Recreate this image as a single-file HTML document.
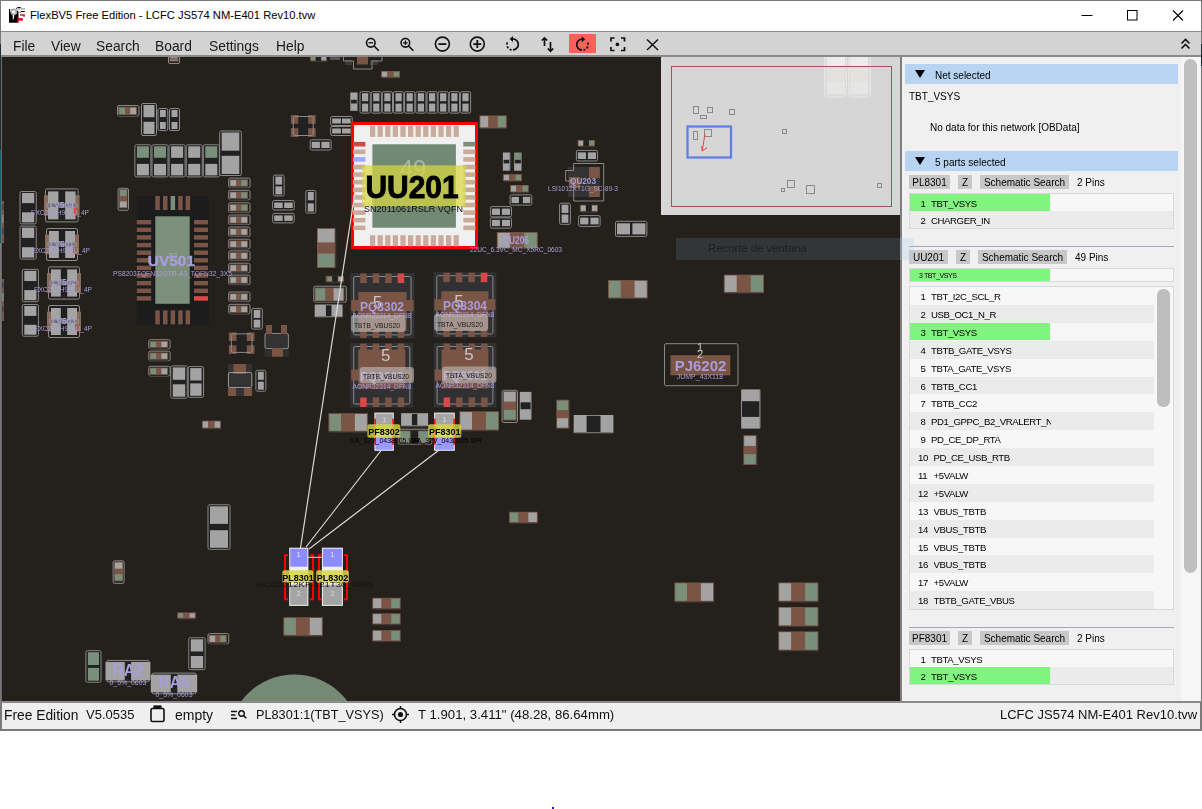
<!DOCTYPE html>
<html><head><meta charset="utf-8">
<style>
*{box-sizing:border-box;margin:0;padding:0}
html,body{width:1202px;height:809px;overflow:hidden;background:#fff;font-family:"Liberation Sans",sans-serif;color:#111}
.abs{position:absolute}
.mi,.st,.p,.btn,.tbl,svg,.gs{will-change:transform}
#win{position:absolute;left:0;top:0;width:1202px;height:731px;border:1px solid #7a7a7a;border-bottom:none;background:#fff}
#title{position:absolute;left:1px;top:1px;width:1200px;height:30px;background:#fff}
#title .t{position:absolute;left:29px;top:7.5px;font-size:11.2px;color:#000;white-space:pre}
#menubar{position:absolute;left:1px;top:31px;width:1200px;height:26px;background:#d3d3d3;border-top:1px solid #8c8c8c;border-bottom:2px solid #8a8a8a}
.mi{position:absolute;top:38.5px;font-size:13.8px;color:#1a1a1a;white-space:pre}
#canvas{position:absolute;left:2px;top:57px;width:898px;height:644px;background:#24211c;overflow:hidden}
#panel{position:absolute;left:900px;top:57px;width:301px;height:645px;background:#f0f0f0;border-left:2px solid #7d7d7d;overflow:hidden}
#status{position:absolute;left:0;top:701px;width:1202px;height:30px;background:#efefef;border-top:2px solid #8a8a8a;border-bottom:2px solid #7a7a7a;border-left:2px solid #7a7a7a;border-right:2px solid #7a7a7a}
.st{position:absolute;top:707px;font-size:13px;color:#111;white-space:pre}
.hdr{position:absolute;left:905px;width:273px;background:#b8d4f2}
.tri{position:absolute;width:0;height:0;border-left:5px solid transparent;border-right:5px solid transparent;border-top:8px solid #000}
.btn{position:absolute;height:14px;background:#c8c8c8;font-size:10px;color:#000;white-space:pre;line-height:15px;text-align:center}
.p{position:absolute;font-size:10px;color:#000;white-space:pre}
.tbl{position:absolute;left:909px;width:265px;border:1px solid #d8d8d8;background:#f7f7f7}
.row{position:absolute;left:0;width:263px;height:18px}
.g{position:absolute;left:0;top:0;width:140px;height:17px;background:#80f47e}
.row .nm{width:120px;overflow:hidden}
.row span{position:absolute;top:3.5px;font-size:9.6px;color:#000;white-space:pre;letter-spacing:-0.4px}
</style></head><body>
<div id="win"></div>
<div id="title">
  <svg class="abs" style="left:4px;top:3px" width="24" height="24" viewBox="5 4 24 24">
    <path d="M9 9h1.2v3.5l1.5-1.5h2.5l2.5-1 1.8 1.5V22.8H9z" fill="#000"/>
    <path d="M11.2 12.5c0.8 1 1.3 2.5 1.6 3.5 0.1 1.5-0.3 2.5 0.2 4.5 0.5-1.5 1-3 1.3-4.5l-0.5-3z" fill="#fff"/>
    <circle cx="13.8" cy="11.9" r="2.5" fill="#fff" stroke="#a8a8a8" stroke-width="1.6"/>
    <path d="M16.8 8.9h8.2" stroke="#b8b8b8" stroke-width="1.7"/>
    <path d="M16.3 8.6l1.2-1.1h3.3" stroke="#000" stroke-width="1" fill="none"/>
    <path d="M20 12.8l1-1.3h3.8" stroke="#000" stroke-width="1" fill="none"/>
    <path d="M20.1 14.2h4.8v2.6h-1.6v-1h-3.2z" fill="#d81818"/>
    <path d="M17.4 18.1h5.4v2.6h-4.6v2h-0.8z" fill="#d81818"/>
  </svg>
  <div class="t">FlexBV5 Free Edition - LCFC JS574 NM-E401 Rev10.tvw</div>
  <svg class="abs" style="left:1069px;top:-1px" width="130" height="30">
    <path d="M11.5 15.5h11" stroke="#000" stroke-width="1"/>
    <rect x="57.5" y="10.5" width="9.5" height="9.5" fill="none" stroke="#000" stroke-width="1"/>
    <path d="M103 10.5l10 10M113 10.5l-10 10" stroke="#000" stroke-width="1.1"/>
  </svg>
</div>
<div id="menubar"></div>
<div class="mi" style="left:13px">File</div>
<div class="mi" style="left:51px">View</div>
<div class="mi" style="left:96px">Search</div>
<div class="mi" style="left:155px">Board</div>
<div class="mi" style="left:209px">Settings</div>
<div class="mi" style="left:276px">Help</div>
<svg class="abs" style="left:0;top:32px" width="1202" height="23">
  <g fill="none" stroke="#111" stroke-width="1.6">
    <circle cx="370.8" cy="10.8" r="4.3"/><path d="M373.8 13.8l5 5"/><path d="M368.5 10.8h4.6" stroke-width="1.3"/>
    <circle cx="405.4" cy="10.8" r="4.3"/><path d="M408.4 13.8l5 5"/><path d="M403.1 10.8h4.6M405.4 8.5v4.6" stroke-width="1.3"/>
    <circle cx="442.4" cy="12.1" r="7"/><path d="M438.4 12.1h8" stroke-width="1.8"/>
    <circle cx="477.3" cy="12.1" r="7"/><path d="M473.3 12.1h8M477.3 8.1v8" stroke-width="1.8"/>
  </g>
  <rect x="569" y="2" width="27" height="19" fill="#f8625a"/>
  <g fill="none" stroke="#111" stroke-width="1.7">
    <path d="M512.6 6.9 A5.5 5.5 0 0 1 513 17.9" />
    <path d="M511.6 17.9 A5.5 5.5 0 0 1 507.4 10.2" stroke-dasharray="2.2 1.6"/>
    <path d="M544.5 6v8M541.8 8.5l2.7-2.6 2.7 2.6M550.5 10v9M547.8 16.5l2.7 2.7 2.7-2.7"/>
    <path d="M582.4 7.1 A5.5 5.5 0 0 0 582 18.1" />
    <path d="M583.4 18.1 A5.5 5.5 0 0 0 587.6 10.4" stroke-dasharray="2.2 1.6"/>
    <path d="M611 9.5v-3.5h3.5M621 6h3.5v3.5M624.5 15v3.5H621M614.5 18.5H611V15"/>
    <path d="M647 7.5l11 10.5M658 7.5l-11 10.5" stroke-width="1.5"/>
  </g>
  <circle cx="617.4" cy="12.4" r="1.8" fill="#111"/>
  <path d="M509.6 7l3.4-3v6z M585.2 7.2l-3.4-3v6z" fill="#111"/>
  <path d="M1181.5 11.5l4-4 4 4M1181.5 16.5l4-4 4 4" fill="none" stroke="#111" stroke-width="1.6"/>
</svg>

<div id="canvas"></div>
<div class="abs" style="left:1px;top:57px;width:1px;height:645px;background:#6a6a6a"></div>
<div class="abs" style="left:552px;top:807px;width:2px;height:2px;background:#1a1aff"></div>
<div class="abs" style="left:0;top:44px;width:1px;height:106px;background:#222c33"></div>
<div class="abs" style="left:0;top:150px;width:1px;height:93px;background:#17606f"></div>
<div class="abs" style="left:1201px;top:44px;width:1px;height:22px;background:#1d262c"></div>
<!--CANVAS--><svg class="abs" style="left:2px;top:57px" width="898" height="644" viewBox="2 57 898 644" font-family="Liberation Sans, sans-serif"><rect x="311.0" y="61.0" width="16.0" height="1.0" fill="#3a3a3a" />
<rect x="310.0" y="55.0" width="17.0" height="6.0" fill="#7a5546" />
<rect x="311.0" y="55.8" width="4.4" height="4.4" fill="#7a8f7a" />
<rect x="315.8" y="55.0" width="5.3" height="6.0" fill="#212121" />
<rect x="321.4" y="55.8" width="4.6" height="4.4" fill="#a3a3a3" />
<rect x="330.0" y="55.0" width="10.0" height="5.0" fill="#555" />
<rect x="345.0" y="60.0" width="7.0" height="5.0" fill="#3a3a3a" />
<rect x="370.0" y="60.0" width="8.0" height="5.0" fill="#3a3a3a" />
<rect x="357.0" y="57.0" width="11.0" height="7.5" fill="#7a5546" />
<path d="M343.5 55v6h10v8h18.5v-8h10v-6" fill="none" stroke="#888" stroke-width="1"/>
<rect x="168.5" y="55.5" width="11.0" height="8.0" rx="1.5" fill="none" stroke="#8a8a8a" stroke-width="1"/>
<rect x="169.5" y="56.2" width="9.0" height="5.3" fill="#7a5546" />
<rect x="170.3" y="57.2" width="7.4" height="0.9" fill="#a3a3a3" />
<rect x="170.3" y="59.6" width="7.4" height="0.9" fill="#a3a3a3" />
<rect x="382.0" y="77.5" width="18.0" height="1.0" fill="#3a3a3a" />
<rect x="381.0" y="71.0" width="19.0" height="6.5" fill="#7a5546" />
<rect x="382.0" y="71.8" width="5.1" height="4.9" fill="#a3a3a3" />
<rect x="393.7" y="71.8" width="5.3" height="4.9" fill="#7a8f7a" />
<rect x="117.5" y="105.5" width="21.5" height="10.5" rx="1.5" fill="none" stroke="#8a8a8a" stroke-width="1"/>
<rect x="118.2" y="115.0" width="18.8" height="1.0" fill="#212121" />
<rect x="118.2" y="106.8" width="18.8" height="8.2" fill="#7a5546" />
<rect x="119.2" y="107.6" width="5.8" height="6.6" fill="#7a8f7a" />
<rect x="130.2" y="107.6" width="5.8" height="6.6" fill="#a3a3a3" />
<rect x="141.5" y="103.5" width="15.0" height="32.0" rx="1.5" fill="none" stroke="#8a8a8a" stroke-width="1"/>
<rect x="142.5" y="104.5" width="13.0" height="30.0" fill="#212121" />
<rect x="143.5" y="105.0" width="11.0" height="12.2" fill="#a3a3a3" />
<rect x="143.5" y="121.8" width="11.0" height="12.2" fill="#a3a3a3" />
<rect x="158.0" y="108.5" width="9.8" height="22.0" rx="1.5" fill="none" stroke="#8a8a8a" stroke-width="1"/>
<rect x="159.0" y="109.5" width="7.8" height="20.0" fill="#212121" />
<rect x="160.0" y="110.0" width="5.8" height="7.0" fill="#a3a3a3" />
<rect x="160.0" y="122.0" width="5.8" height="7.0" fill="#a3a3a3" />
<rect x="169.5" y="108.5" width="10.0" height="22.0" rx="1.5" fill="none" stroke="#8a8a8a" stroke-width="1"/>
<rect x="170.5" y="109.5" width="8.0" height="20.0" fill="#212121" />
<rect x="171.5" y="110.0" width="6.0" height="7.0" fill="#a3a3a3" />
<rect x="171.5" y="122.0" width="6.0" height="7.0" fill="#a3a3a3" />
<rect x="134.9" y="144.8" width="16.0" height="32.1" rx="1.5" fill="none" stroke="#8a8a8a" stroke-width="1"/>
<rect x="135.9" y="145.8" width="14.0" height="30.1" fill="#212121" />
<rect x="136.9" y="146.3" width="12.0" height="11.5" fill="#7a8f7a" />
<rect x="136.9" y="163.9" width="12.0" height="11.5" fill="#a3a3a3" />
<rect x="152.0" y="144.8" width="16.0" height="32.1" rx="1.5" fill="none" stroke="#8a8a8a" stroke-width="1"/>
<rect x="153.0" y="145.8" width="14.0" height="30.1" fill="#212121" />
<rect x="154.0" y="146.3" width="12.0" height="11.5" fill="#7a8f7a" />
<rect x="154.0" y="163.9" width="12.0" height="11.5" fill="#a3a3a3" />
<rect x="169.1" y="144.8" width="16.0" height="32.1" rx="1.5" fill="none" stroke="#8a8a8a" stroke-width="1"/>
<rect x="170.1" y="145.8" width="14.0" height="30.1" fill="#212121" />
<rect x="171.1" y="146.3" width="12.0" height="11.5" fill="#a3a3a3" />
<rect x="171.1" y="163.9" width="12.0" height="11.5" fill="#a3a3a3" />
<rect x="186.2" y="144.8" width="16.0" height="32.1" rx="1.5" fill="none" stroke="#8a8a8a" stroke-width="1"/>
<rect x="187.2" y="145.8" width="14.0" height="30.1" fill="#212121" />
<rect x="188.2" y="146.3" width="12.0" height="11.5" fill="#a3a3a3" />
<rect x="188.2" y="163.9" width="12.0" height="11.5" fill="#a3a3a3" />
<rect x="203.3" y="144.8" width="16.0" height="32.1" rx="1.5" fill="none" stroke="#8a8a8a" stroke-width="1"/>
<rect x="204.3" y="145.8" width="14.0" height="30.1" fill="#212121" />
<rect x="205.3" y="146.3" width="12.0" height="11.5" fill="#7a8f7a" />
<rect x="205.3" y="163.9" width="12.0" height="11.5" fill="#a3a3a3" />
<rect x="219.7" y="131.0" width="21.6" height="44.5" rx="1.5" fill="none" stroke="#8a8a8a" stroke-width="1"/>
<rect x="220.7" y="132.0" width="19.6" height="42.5" fill="#212121" />
<rect x="221.7" y="132.5" width="17.6" height="18.2" fill="#a3a3a3" />
<rect x="221.7" y="155.8" width="17.6" height="18.2" fill="#a3a3a3" />
<rect x="290.8" y="115.0" width="24.9" height="22.0" fill="#212121" />
<rect x="290.8" y="115.0" width="7.5" height="8.8" fill="#7a5546" />
<rect x="308.2" y="115.0" width="7.5" height="8.8" fill="#7a5546" />
<rect x="290.8" y="128.2" width="7.5" height="8.8" fill="#7a5546" />
<rect x="308.2" y="128.2" width="7.5" height="8.8" fill="#7a5546" />
<rect x="293.3" y="116.5" width="19.9" height="19.0" rx="1.5" fill="none" stroke="#8a8a8a" stroke-width="1"/>
<rect x="310.2" y="139.8" width="20.9" height="10.2" rx="1.5" fill="none" stroke="#8a8a8a" stroke-width="1"/>
<rect x="311.2" y="140.8" width="18.9" height="8.2" fill="#212121" />
<rect x="311.7" y="141.8" width="8.2" height="6.2" fill="#a3a3a3" />
<rect x="321.4" y="141.8" width="8.2" height="6.2" fill="#a3a3a3" />
<rect x="330.7" y="116.5" width="21.5" height="9.0" rx="1.5" fill="none" stroke="#8a8a8a" stroke-width="1"/>
<rect x="331.7" y="117.5" width="19.5" height="7.0" fill="#212121" />
<rect x="332.2" y="118.5" width="8.7" height="5.0" fill="#a3a3a3" />
<rect x="342.0" y="118.5" width="8.7" height="5.0" fill="#a3a3a3" />
<rect x="330.7" y="126.5" width="21.5" height="9.0" rx="1.5" fill="none" stroke="#8a8a8a" stroke-width="1"/>
<rect x="331.7" y="127.5" width="19.5" height="7.0" fill="#212121" />
<rect x="332.2" y="128.5" width="8.7" height="5.0" fill="#a3a3a3" />
<rect x="342.0" y="128.5" width="8.7" height="5.0" fill="#a3a3a3" />
<rect x="350.3" y="92.5" width="7.3" height="9.2" fill="#a3a3a3" />
<rect x="350.3" y="101.7" width="7.3" height="9.1" fill="#a3a3a3" />
<rect x="351.1" y="99.8" width="5.7" height="3.7" fill="#212121" />
<rect x="357.0" y="93.5" width="1.0" height="16.3" fill="#666" />
<rect x="360.0" y="91.7" width="10.2" height="21.4" rx="1.5" fill="none" stroke="#8a8a8a" stroke-width="1"/>
<rect x="361.0" y="92.7" width="8.2" height="19.4" fill="#212121" />
<rect x="362.0" y="93.2" width="6.2" height="8.0" fill="#a3a3a3" />
<rect x="362.0" y="103.6" width="6.2" height="8.0" fill="#a3a3a3" />
<rect x="371.2" y="91.7" width="10.2" height="21.4" rx="1.5" fill="none" stroke="#8a8a8a" stroke-width="1"/>
<rect x="372.2" y="92.7" width="8.2" height="19.4" fill="#212121" />
<rect x="373.2" y="93.2" width="6.2" height="8.0" fill="#a3a3a3" />
<rect x="373.2" y="103.6" width="6.2" height="8.0" fill="#a3a3a3" />
<rect x="382.3" y="91.7" width="10.2" height="21.4" rx="1.5" fill="none" stroke="#8a8a8a" stroke-width="1"/>
<rect x="383.3" y="92.7" width="8.2" height="19.4" fill="#212121" />
<rect x="384.3" y="93.2" width="6.2" height="8.0" fill="#a3a3a3" />
<rect x="384.3" y="103.6" width="6.2" height="8.0" fill="#a3a3a3" />
<rect x="393.5" y="91.7" width="10.2" height="21.4" rx="1.5" fill="none" stroke="#8a8a8a" stroke-width="1"/>
<rect x="394.5" y="92.7" width="8.2" height="19.4" fill="#212121" />
<rect x="395.5" y="93.2" width="6.2" height="8.0" fill="#a3a3a3" />
<rect x="395.5" y="103.6" width="6.2" height="8.0" fill="#a3a3a3" />
<rect x="404.6" y="91.7" width="10.2" height="21.4" rx="1.5" fill="none" stroke="#8a8a8a" stroke-width="1"/>
<rect x="405.6" y="92.7" width="8.2" height="19.4" fill="#212121" />
<rect x="406.6" y="93.2" width="6.2" height="8.0" fill="#a3a3a3" />
<rect x="406.6" y="103.6" width="6.2" height="8.0" fill="#a3a3a3" />
<rect x="415.8" y="91.7" width="10.2" height="21.4" rx="1.5" fill="none" stroke="#8a8a8a" stroke-width="1"/>
<rect x="416.8" y="92.7" width="8.2" height="19.4" fill="#212121" />
<rect x="417.8" y="93.2" width="6.2" height="8.0" fill="#a3a3a3" />
<rect x="417.8" y="103.6" width="6.2" height="8.0" fill="#a3a3a3" />
<rect x="427.0" y="91.7" width="10.2" height="21.4" rx="1.5" fill="none" stroke="#8a8a8a" stroke-width="1"/>
<rect x="428.0" y="92.7" width="8.2" height="19.4" fill="#212121" />
<rect x="429.0" y="93.2" width="6.2" height="8.0" fill="#a3a3a3" />
<rect x="429.0" y="103.6" width="6.2" height="8.0" fill="#a3a3a3" />
<rect x="438.1" y="91.7" width="10.2" height="21.4" rx="1.5" fill="none" stroke="#8a8a8a" stroke-width="1"/>
<rect x="439.1" y="92.7" width="8.2" height="19.4" fill="#212121" />
<rect x="440.1" y="93.2" width="6.2" height="8.0" fill="#a3a3a3" />
<rect x="440.1" y="103.6" width="6.2" height="8.0" fill="#a3a3a3" />
<rect x="449.3" y="91.7" width="10.2" height="21.4" rx="1.5" fill="none" stroke="#8a8a8a" stroke-width="1"/>
<rect x="450.3" y="92.7" width="8.2" height="19.4" fill="#212121" />
<rect x="451.3" y="93.2" width="6.2" height="8.0" fill="#a3a3a3" />
<rect x="451.3" y="103.6" width="6.2" height="8.0" fill="#a3a3a3" />
<rect x="460.4" y="91.7" width="10.2" height="21.4" rx="1.5" fill="none" stroke="#8a8a8a" stroke-width="1"/>
<rect x="461.4" y="92.7" width="8.2" height="19.4" fill="#212121" />
<rect x="462.4" y="93.2" width="6.2" height="8.0" fill="#a3a3a3" />
<rect x="462.4" y="103.6" width="6.2" height="8.0" fill="#a3a3a3" />
<rect x="480.4" y="128.0" width="26.4" height="1.0" fill="#3a3a3a" />
<rect x="479.4" y="115.4" width="27.4" height="12.6" fill="#7a5546" />
<rect x="480.4" y="116.2" width="7.8" height="11.0" fill="#a3a3a3" />
<rect x="497.8" y="116.2" width="8.0" height="11.0" fill="#7a8f7a" />
<rect x="228.7" y="178.1" width="21.3" height="9.5" rx="1.5" fill="none" stroke="#8a8a8a" stroke-width="1"/>
<rect x="229.4" y="186.6" width="18.6" height="1.0" fill="#212121" />
<rect x="229.4" y="179.4" width="18.6" height="7.2" fill="#7a5546" />
<rect x="230.4" y="180.2" width="5.7" height="5.6" fill="#a3a3a3" />
<rect x="241.3" y="180.2" width="5.7" height="5.6" fill="#7a8f7a" />
<rect x="228.7" y="190.3" width="21.3" height="9.5" rx="1.5" fill="none" stroke="#8a8a8a" stroke-width="1"/>
<rect x="229.4" y="198.8" width="18.6" height="1.0" fill="#212121" />
<rect x="229.4" y="191.6" width="18.6" height="7.2" fill="#7a5546" />
<rect x="230.4" y="192.4" width="5.7" height="5.6" fill="#a3a3a3" />
<rect x="241.3" y="192.4" width="5.7" height="5.6" fill="#7a8f7a" />
<rect x="228.7" y="202.8" width="21.3" height="9.5" rx="1.5" fill="none" stroke="#8a8a8a" stroke-width="1"/>
<rect x="229.4" y="211.3" width="18.6" height="1.0" fill="#212121" />
<rect x="229.4" y="204.1" width="18.6" height="7.2" fill="#7a5546" />
<rect x="230.4" y="204.9" width="5.7" height="5.6" fill="#a3a3a3" />
<rect x="241.3" y="204.9" width="5.7" height="5.6" fill="#7a8f7a" />
<rect x="228.7" y="215.0" width="21.3" height="9.5" rx="1.5" fill="none" stroke="#8a8a8a" stroke-width="1"/>
<rect x="229.4" y="223.5" width="18.6" height="1.0" fill="#212121" />
<rect x="229.4" y="216.3" width="18.6" height="7.2" fill="#7a5546" />
<rect x="230.4" y="217.1" width="5.7" height="5.6" fill="#a3a3a3" />
<rect x="241.3" y="217.1" width="5.7" height="5.6" fill="#a3a3a3" />
<rect x="228.7" y="227.0" width="21.3" height="9.5" rx="1.5" fill="none" stroke="#8a8a8a" stroke-width="1"/>
<rect x="229.4" y="235.5" width="18.6" height="1.0" fill="#212121" />
<rect x="229.4" y="228.3" width="18.6" height="7.2" fill="#7a5546" />
<rect x="230.4" y="229.1" width="5.7" height="5.6" fill="#a3a3a3" />
<rect x="241.3" y="229.1" width="5.7" height="5.6" fill="#a3a3a3" />
<rect x="228.7" y="239.2" width="21.3" height="9.5" rx="1.5" fill="none" stroke="#8a8a8a" stroke-width="1"/>
<rect x="229.4" y="247.7" width="18.6" height="1.0" fill="#212121" />
<rect x="229.4" y="240.5" width="18.6" height="7.2" fill="#7a5546" />
<rect x="230.4" y="241.3" width="5.7" height="5.6" fill="#a3a3a3" />
<rect x="241.3" y="241.3" width="5.7" height="5.6" fill="#a3a3a3" />
<rect x="228.7" y="250.9" width="21.3" height="9.5" rx="1.5" fill="none" stroke="#8a8a8a" stroke-width="1"/>
<rect x="229.4" y="259.4" width="18.6" height="1.0" fill="#212121" />
<rect x="229.4" y="252.2" width="18.6" height="7.2" fill="#7a5546" />
<rect x="230.4" y="253.0" width="5.7" height="5.6" fill="#a3a3a3" />
<rect x="241.3" y="253.0" width="5.7" height="5.6" fill="#a3a3a3" />
<rect x="228.7" y="263.2" width="21.3" height="9.5" rx="1.5" fill="none" stroke="#8a8a8a" stroke-width="1"/>
<rect x="229.4" y="271.7" width="18.6" height="1.0" fill="#212121" />
<rect x="229.4" y="264.5" width="18.6" height="7.2" fill="#7a5546" />
<rect x="230.4" y="265.3" width="5.7" height="5.6" fill="#a3a3a3" />
<rect x="241.3" y="265.3" width="5.7" height="5.6" fill="#a3a3a3" />
<rect x="228.7" y="275.1" width="21.3" height="9.5" rx="1.5" fill="none" stroke="#8a8a8a" stroke-width="1"/>
<rect x="229.4" y="283.6" width="18.6" height="1.0" fill="#212121" />
<rect x="229.4" y="276.4" width="18.6" height="7.2" fill="#7a5546" />
<rect x="230.4" y="277.2" width="5.7" height="5.6" fill="#a3a3a3" />
<rect x="241.3" y="277.2" width="5.7" height="5.6" fill="#a3a3a3" />
<rect x="228.7" y="292.0" width="21.3" height="9.5" rx="1.5" fill="none" stroke="#8a8a8a" stroke-width="1"/>
<rect x="229.4" y="300.5" width="18.6" height="1.0" fill="#212121" />
<rect x="229.4" y="293.3" width="18.6" height="7.2" fill="#7a5546" />
<rect x="230.4" y="294.1" width="5.7" height="5.6" fill="#a3a3a3" />
<rect x="241.3" y="294.1" width="5.7" height="5.6" fill="#a3a3a3" />
<rect x="228.7" y="304.3" width="21.3" height="9.5" rx="1.5" fill="none" stroke="#8a8a8a" stroke-width="1"/>
<rect x="229.4" y="312.8" width="18.6" height="1.0" fill="#212121" />
<rect x="229.4" y="305.6" width="18.6" height="7.2" fill="#7a5546" />
<rect x="230.4" y="306.4" width="5.7" height="5.6" fill="#a3a3a3" />
<rect x="241.3" y="306.4" width="5.7" height="5.6" fill="#a3a3a3" />
<rect x="251.7" y="308.5" width="10.6" height="20.6" rx="1.5" fill="none" stroke="#8a8a8a" stroke-width="1"/>
<rect x="252.7" y="309.5" width="8.6" height="18.6" fill="#212121" />
<rect x="253.7" y="310.0" width="6.6" height="7.9" fill="#a3a3a3" />
<rect x="253.7" y="319.7" width="6.6" height="7.9" fill="#a3a3a3" />
<rect x="273.4" y="175.1" width="10.7" height="20.8" rx="1.5" fill="none" stroke="#8a8a8a" stroke-width="1"/>
<rect x="274.4" y="176.1" width="8.7" height="18.8" fill="#212121" />
<rect x="275.4" y="176.6" width="6.7" height="8.0" fill="#a3a3a3" />
<rect x="275.4" y="186.4" width="6.7" height="8.0" fill="#a3a3a3" />
<rect x="272.7" y="200.5" width="21.5" height="9.5" rx="1.5" fill="none" stroke="#8a8a8a" stroke-width="1"/>
<rect x="273.7" y="201.5" width="19.5" height="7.5" fill="#212121" />
<rect x="274.2" y="202.5" width="8.5" height="5.5" fill="#a3a3a3" />
<rect x="284.2" y="202.5" width="8.5" height="5.5" fill="#a3a3a3" />
<rect x="272.7" y="213.4" width="21.5" height="9.5" rx="1.5" fill="none" stroke="#8a8a8a" stroke-width="1"/>
<rect x="273.7" y="214.4" width="19.5" height="7.5" fill="#212121" />
<rect x="274.2" y="215.4" width="8.5" height="5.5" fill="#a3a3a3" />
<rect x="284.2" y="215.4" width="8.5" height="5.5" fill="#a3a3a3" />
<rect x="305.8" y="190.5" width="10.0" height="22.6" rx="1.5" fill="none" stroke="#8a8a8a" stroke-width="1"/>
<rect x="306.8" y="191.5" width="8.0" height="20.6" fill="#212121" />
<rect x="307.8" y="192.0" width="6.0" height="8.3" fill="#a3a3a3" />
<rect x="307.8" y="203.3" width="6.0" height="8.3" fill="#a3a3a3" />
<rect x="335.3" y="229.0" width="1.0" height="39.0" fill="#3a3a3a" />
<rect x="317.0" y="228.0" width="18.3" height="40.0" fill="#7a5546" />
<rect x="317.8" y="229.0" width="16.7" height="13.4" fill="#a3a3a3" />
<rect x="317.8" y="253.6" width="16.7" height="13.4" fill="#7a8f7a" />
<rect x="326.7" y="281.6" width="17.3" height="1.0" fill="#3a3a3a" />
<rect x="325.7" y="275.8" width="18.3" height="5.8" fill="#7a5546" />
<rect x="326.7" y="276.6" width="4.9" height="4.2" fill="#7a8f7a" />
<rect x="331.9" y="275.8" width="5.7" height="5.8" fill="#212121" />
<rect x="338.0" y="276.6" width="5.0" height="4.2" fill="#a3a3a3" />
<rect x="313.8" y="286.2" width="32.5" height="16.1" rx="1.5" fill="none" stroke="#8a8a8a" stroke-width="1"/>
<rect x="314.5" y="301.3" width="29.8" height="1.0" fill="#212121" />
<rect x="314.5" y="287.5" width="29.8" height="13.8" fill="#7a5546" />
<rect x="315.5" y="288.3" width="9.7" height="12.2" fill="#7a8f7a" />
<rect x="333.6" y="288.3" width="9.7" height="12.2" fill="#a3a3a3" />
<rect x="314.7" y="304.5" width="13.9" height="12.5" fill="#a3a3a3" />
<rect x="328.6" y="304.5" width="14.0" height="12.5" fill="#a3a3a3" />
<rect x="325.9" y="305.3" width="5.6" height="10.9" fill="#212121" />
<rect x="315.7" y="316.4" width="25.9" height="1.0" fill="#666" />
<rect x="118.1" y="188.3" width="10.4" height="22.0" rx="1.5" fill="none" stroke="#8a8a8a" stroke-width="1"/>
<rect x="119.1" y="189.0" width="8.4" height="19.3" fill="#7a5546" />
<rect x="119.9" y="190.0" width="6.8" height="5.9" fill="#7a8f7a" />
<rect x="119.9" y="201.4" width="6.8" height="5.9" fill="#a3a3a3" />
<rect x="20.0" y="191.5" width="16.2" height="32.4" rx="1.5" fill="none" stroke="#8a8a8a" stroke-width="1"/>
<rect x="21.0" y="192.5" width="14.2" height="30.4" fill="#212121" />
<rect x="22.0" y="193.0" width="12.2" height="10.1" fill="#a3a3a3" />
<rect x="22.0" y="212.3" width="12.2" height="10.1" fill="#a3a3a3" />
<rect x="20.0" y="226.1" width="16.2" height="33.0" rx="1.5" fill="none" stroke="#8a8a8a" stroke-width="1"/>
<rect x="21.0" y="227.1" width="14.2" height="31.0" fill="#212121" />
<rect x="22.0" y="227.6" width="12.2" height="10.3" fill="#a3a3a3" />
<rect x="22.0" y="247.2" width="12.2" height="10.4" fill="#a3a3a3" />
<rect x="22.3" y="269.4" width="16.1" height="32.3" rx="1.5" fill="none" stroke="#8a8a8a" stroke-width="1"/>
<rect x="23.3" y="270.4" width="14.1" height="30.3" fill="#212121" />
<rect x="24.3" y="270.9" width="12.1" height="10.1" fill="#a3a3a3" />
<rect x="24.3" y="290.1" width="12.1" height="10.1" fill="#a3a3a3" />
<rect x="22.3" y="304.5" width="16.1" height="31.7" rx="1.5" fill="none" stroke="#8a8a8a" stroke-width="1"/>
<rect x="23.3" y="305.5" width="14.1" height="29.7" fill="#212121" />
<rect x="24.3" y="306.0" width="12.1" height="9.9" fill="#a3a3a3" />
<rect x="24.3" y="324.8" width="12.1" height="9.9" fill="#a3a3a3" />
<rect x="45.5" y="188.9" width="32.6" height="33.0" rx="1.5" fill="none" stroke="#8a8a8a" stroke-width="1"/>
<rect x="47.0" y="190.4" width="29.6" height="30.0" fill="#212121" />
<rect x="44.0" y="195.2" width="4.5" height="20.4" fill="#8a6a5a" />
<rect x="75.1" y="195.2" width="4.5" height="20.4" fill="#8a6a5a" />
<rect x="48.0" y="191.4" width="10.4" height="12.3" fill="#a3a3a3" />
<rect x="65.2" y="191.4" width="10.4" height="12.3" fill="#a3a3a3" />
<rect x="48.0" y="207.1" width="10.4" height="12.3" fill="#a3a3a3" />
<rect x="65.2" y="207.1" width="10.4" height="12.3" fill="#a3a3a3" />
<rect x="46.0" y="203.0" width="31.6" height="4.8" fill="#8c8c8c" opacity="0.8"/>
<rect x="73.6" y="208.1" width="3.0" height="6.0" fill="#e04848" />
<text x="61.8" y="207.78" font-size="9" fill="#a99ddc" font-weight="bold" text-anchor="middle" textLength="24" lengthAdjust="spacingAndGlyphs">LV504</text>
<rect x="46.5" y="228.5" width="31.0" height="32.0" rx="1.5" fill="none" stroke="#8a8a8a" stroke-width="1"/>
<rect x="48.0" y="230.0" width="28.0" height="29.0" fill="#212121" />
<rect x="45.0" y="234.6" width="4.5" height="19.8" fill="#8a6a5a" />
<rect x="74.5" y="234.6" width="4.5" height="19.8" fill="#8a6a5a" />
<rect x="49.0" y="231.0" width="9.8" height="11.8" fill="#a3a3a3" />
<rect x="65.2" y="231.0" width="9.8" height="11.8" fill="#a3a3a3" />
<rect x="49.0" y="246.2" width="9.8" height="11.8" fill="#a3a3a3" />
<rect x="65.2" y="246.2" width="9.8" height="11.8" fill="#a3a3a3" />
<rect x="47.0" y="242.2" width="30.0" height="4.6" fill="#8c8c8c" opacity="0.8"/>
<rect x="73.0" y="247.1" width="3.0" height="6.0" fill="#e04848" />
<text x="62.0" y="246.81" font-size="9" fill="#a99ddc" font-weight="bold" text-anchor="middle" textLength="24" lengthAdjust="spacingAndGlyphs">LV501</text>
<rect x="48.5" y="266.9" width="31.0" height="32.2" rx="1.5" fill="none" stroke="#8a8a8a" stroke-width="1"/>
<rect x="50.0" y="268.4" width="28.0" height="29.2" fill="#212121" />
<rect x="47.0" y="273.0" width="4.5" height="19.9" fill="#8a6a5a" />
<rect x="76.5" y="273.0" width="4.5" height="19.9" fill="#8a6a5a" />
<rect x="51.0" y="269.4" width="9.8" height="11.9" fill="#a3a3a3" />
<rect x="67.2" y="269.4" width="9.8" height="11.9" fill="#a3a3a3" />
<rect x="51.0" y="284.7" width="9.8" height="11.9" fill="#a3a3a3" />
<rect x="67.2" y="284.7" width="9.8" height="11.9" fill="#a3a3a3" />
<rect x="49.0" y="280.7" width="30.0" height="4.6" fill="#8c8c8c" opacity="0.8"/>
<rect x="75.0" y="285.7" width="3.0" height="6.0" fill="#e04848" />
<text x="64.0" y="285.324" font-size="9" fill="#a99ddc" font-weight="bold" text-anchor="middle" textLength="24" lengthAdjust="spacingAndGlyphs">LV502</text>
<rect x="48.5" y="305.5" width="31.0" height="32.0" rx="1.5" fill="none" stroke="#8a8a8a" stroke-width="1"/>
<rect x="50.0" y="307.0" width="28.0" height="29.0" fill="#212121" />
<rect x="47.0" y="311.6" width="4.5" height="19.8" fill="#8a6a5a" />
<rect x="76.5" y="311.6" width="4.5" height="19.8" fill="#8a6a5a" />
<rect x="51.0" y="308.0" width="9.8" height="11.9" fill="#a3a3a3" />
<rect x="67.2" y="308.0" width="9.8" height="11.9" fill="#a3a3a3" />
<rect x="51.0" y="323.1" width="9.8" height="11.9" fill="#a3a3a3" />
<rect x="67.2" y="323.1" width="9.8" height="11.9" fill="#a3a3a3" />
<rect x="49.0" y="319.2" width="30.0" height="4.6" fill="#8c8c8c" opacity="0.8"/>
<rect x="75.0" y="324.1" width="3.0" height="6.0" fill="#e04848" />
<text x="64.0" y="323.81" font-size="9" fill="#a99ddc" font-weight="bold" text-anchor="middle" textLength="24" lengthAdjust="spacingAndGlyphs">LV503</text>
<text x="31" y="214.5" font-size="7" fill="#a99ddc" font-weight="normal" text-anchor="start" textLength="58" lengthAdjust="spacingAndGlyphs">EXC24CH900U_4P</text>
<text x="32" y="253" font-size="7" fill="#a99ddc" font-weight="normal" text-anchor="start" textLength="58" lengthAdjust="spacingAndGlyphs">EXC24CH900U_4P</text>
<text x="34" y="292" font-size="7" fill="#a99ddc" font-weight="normal" text-anchor="start" textLength="58" lengthAdjust="spacingAndGlyphs">EXC24CH900U_4P</text>
<text x="34" y="331" font-size="7" fill="#a99ddc" font-weight="normal" text-anchor="start" textLength="58" lengthAdjust="spacingAndGlyphs">EXC24CH900U_4P</text>
<rect x="136.8" y="196.0" width="71.9" height="128.8" fill="#1c1c1d" />
<rect x="155.3" y="216.3" width="34.4" height="87.5" fill="#7b8f7a" />
<rect x="136.8" y="220.0" width="14.4" height="4.4" fill="#7a5546" />
<rect x="194.0" y="220.0" width="14.0" height="4.4" fill="#7a5546" />
<rect x="136.8" y="227.6" width="14.4" height="4.4" fill="#7a5546" />
<rect x="194.0" y="227.6" width="14.0" height="4.4" fill="#7a5546" />
<rect x="136.8" y="235.2" width="14.4" height="4.4" fill="#7a5546" />
<rect x="194.0" y="235.2" width="14.0" height="4.4" fill="#7a5546" />
<rect x="136.8" y="242.9" width="14.4" height="4.4" fill="#7a5546" />
<rect x="194.0" y="242.9" width="14.0" height="4.4" fill="#7a5546" />
<rect x="136.8" y="250.5" width="14.4" height="4.4" fill="#7a5546" />
<rect x="194.0" y="250.5" width="14.0" height="4.4" fill="#7a5546" />
<rect x="136.8" y="258.1" width="14.4" height="4.4" fill="#7a5546" />
<rect x="194.0" y="258.1" width="14.0" height="4.4" fill="#7a5546" />
<rect x="136.8" y="265.7" width="14.4" height="4.4" fill="#7a5546" />
<rect x="194.0" y="265.7" width="14.0" height="4.4" fill="#7a5546" />
<rect x="136.8" y="273.3" width="14.4" height="4.4" fill="#7a5546" />
<rect x="194.0" y="273.3" width="14.0" height="4.4" fill="#7a5546" />
<rect x="136.8" y="281.0" width="14.4" height="4.4" fill="#7a5546" />
<rect x="194.0" y="281.0" width="14.0" height="4.4" fill="#7a5546" />
<rect x="136.8" y="288.6" width="14.4" height="4.4" fill="#7a5546" />
<rect x="194.0" y="288.6" width="14.0" height="4.4" fill="#7a5546" />
<rect x="136.8" y="296.2" width="14.4" height="4.4" fill="#7a5546" />
<rect x="194.0" y="296.2" width="14.0" height="4.4" fill="#e04848" />
<rect x="155.3" y="196.0" width="4.5" height="14.0" fill="#7a5546" />
<rect x="155.3" y="310.4" width="4.5" height="14.0" fill="#7a5546" />
<rect x="163.0" y="196.0" width="4.5" height="14.0" fill="#7a5546" />
<rect x="163.0" y="310.4" width="4.5" height="14.0" fill="#7a5546" />
<rect x="170.6" y="196.0" width="4.5" height="14.0" fill="#7a8f7a" />
<rect x="170.6" y="310.4" width="4.5" height="14.0" fill="#7a5546" />
<rect x="178.2" y="196.0" width="4.5" height="14.0" fill="#7a5546" />
<rect x="178.2" y="310.4" width="4.5" height="14.0" fill="#7a5546" />
<rect x="185.6" y="196.0" width="4.5" height="14.0" fill="#7a5546" />
<rect x="185.6" y="310.4" width="4.5" height="14.0" fill="#7a5546" />
<text x="173" y="257.5" font-size="8" fill="#b0b0b0" font-weight="normal" text-anchor="middle" >32</text>
<text x="171.3" y="266" font-size="15.5" fill="#a99ddc" font-weight="bold" text-anchor="middle" textLength="47" lengthAdjust="spacingAndGlyphs" stroke="#a99ddc" stroke-width="0.4">UV501</text>
<text x="172.5" y="275.5" font-size="7" fill="#a99ddc" font-weight="normal" text-anchor="middle" textLength="119" lengthAdjust="spacingAndGlyphs">PS8203TQFN32GTR-A3_TQFN32_3X5</text>
<rect x="148.8" y="339.7" width="21.3" height="9.1" rx="1.5" fill="none" stroke="#8a8a8a" stroke-width="1"/>
<rect x="149.5" y="347.8" width="18.6" height="1.0" fill="#212121" />
<rect x="149.5" y="341.0" width="18.6" height="6.8" fill="#7a5546" />
<rect x="150.5" y="341.8" width="5.7" height="5.2" fill="#7a8f7a" />
<rect x="161.4" y="341.8" width="5.7" height="5.2" fill="#a3a3a3" />
<rect x="148.8" y="351.2" width="21.3" height="9.5" rx="1.5" fill="none" stroke="#8a8a8a" stroke-width="1"/>
<rect x="149.5" y="359.7" width="18.6" height="1.0" fill="#212121" />
<rect x="149.5" y="352.5" width="18.6" height="7.2" fill="#7a5546" />
<rect x="150.5" y="353.3" width="5.7" height="5.6" fill="#7a8f7a" />
<rect x="161.4" y="353.3" width="5.7" height="5.6" fill="#a3a3a3" />
<rect x="148.8" y="366.3" width="21.3" height="9.6" rx="1.5" fill="none" stroke="#8a8a8a" stroke-width="1"/>
<rect x="149.5" y="374.9" width="18.6" height="1.0" fill="#212121" />
<rect x="149.5" y="367.6" width="18.6" height="7.3" fill="#7a5546" />
<rect x="150.5" y="368.4" width="5.7" height="5.7" fill="#7a8f7a" />
<rect x="161.4" y="368.4" width="5.7" height="5.7" fill="#a3a3a3" />
<rect x="170.8" y="365.9" width="16.4" height="32.3" rx="1.5" fill="none" stroke="#8a8a8a" stroke-width="1"/>
<rect x="171.8" y="366.9" width="14.4" height="30.3" fill="#212121" />
<rect x="172.8" y="367.4" width="12.4" height="12.4" fill="#a3a3a3" />
<rect x="172.8" y="384.3" width="12.4" height="12.4" fill="#a3a3a3" />
<rect x="188.2" y="366.6" width="15.4" height="30.7" rx="1.5" fill="none" stroke="#8a8a8a" stroke-width="1"/>
<rect x="189.2" y="367.6" width="13.4" height="28.7" fill="#212121" />
<rect x="190.2" y="368.1" width="11.4" height="12.4" fill="#a3a3a3" />
<rect x="190.2" y="383.4" width="11.4" height="12.4" fill="#a3a3a3" />
<rect x="228.8" y="332.4" width="25.7" height="21.5" fill="#212121" />
<rect x="228.8" y="332.4" width="7.7" height="8.6" fill="#7a5546" />
<rect x="246.8" y="332.4" width="7.7" height="8.6" fill="#7a5546" />
<rect x="228.8" y="345.3" width="7.7" height="8.6" fill="#7a5546" />
<rect x="246.8" y="345.3" width="7.7" height="8.6" fill="#7a5546" />
<rect x="231.3" y="333.9" width="20.7" height="18.5" rx="1.5" fill="none" stroke="#8a8a8a" stroke-width="1"/>
<rect x="264.5" y="333.0" width="24.4" height="16.0" fill="#333" />
<rect x="265.0" y="333.5" width="23.4" height="15.0" rx="1.5" fill="none" stroke="#888" stroke-width="1"/>
<rect x="266.0" y="325.0" width="6.0" height="9.0" fill="#7a5546" />
<rect x="281.0" y="325.0" width="6.0" height="9.0" fill="#7a5546" />
<rect x="272.0" y="348.0" width="11.0" height="8.6" fill="#7a5546" />
<rect x="264.5" y="349.0" width="24.4" height="7.6" fill="#333" opacity="0.8"/>
<rect x="272.0" y="348.0" width="11.0" height="8.6" fill="#7a5546" />
<rect x="227.9" y="364.0" width="24.4" height="32.0" fill="#333" />
<rect x="233.5" y="364.0" width="12.5" height="10.0" fill="#7a5546" />
<rect x="228.4" y="372.5" width="23.4" height="15.0" rx="1.5" fill="none" stroke="#999" stroke-width="1"/>
<rect x="228.0" y="388.0" width="8.0" height="8.0" fill="#7a5546" />
<rect x="244.0" y="388.0" width="8.0" height="8.0" fill="#7a5546" />
<rect x="255.9" y="370.3" width="9.9" height="20.9" rx="1.5" fill="none" stroke="#8a8a8a" stroke-width="1"/>
<rect x="256.9" y="371.3" width="7.9" height="18.9" fill="#212121" />
<rect x="257.9" y="371.8" width="5.9" height="8.0" fill="#a3a3a3" />
<rect x="257.9" y="381.7" width="5.9" height="8.0" fill="#a3a3a3" />
<rect x="202.9" y="428.4" width="18.1" height="1.0" fill="#3a3a3a" />
<rect x="201.9" y="420.7" width="19.1" height="7.7" fill="#7a5546" />
<rect x="202.9" y="421.5" width="5.1" height="6.1" fill="#a3a3a3" />
<rect x="214.7" y="421.5" width="5.3" height="6.1" fill="#a3a3a3" />
<rect x="351.0" y="122.0" width="127.0" height="127.0" fill="#ff0000" />
<rect x="354.0" y="125.0" width="121.0" height="121.0" fill="#f0f0f0" />
<rect x="372.4" y="144.3" width="83.5" height="83.4" fill="#728a74" />
<rect x="370.0" y="125.8" width="5.2" height="11.1" fill="#c9ab9b" />
<rect x="370.0" y="235.2" width="5.2" height="11.1" fill="#c9ab9b" />
<rect x="353.0" y="141.9" width="12.4" height="4.6" fill="#d04848" />
<rect x="463.3" y="141.9" width="12.1" height="4.6" fill="#7c907c" />
<rect x="377.6" y="125.8" width="5.2" height="11.1" fill="#c9ab9b" />
<rect x="377.6" y="235.2" width="5.2" height="11.1" fill="#c9ab9b" />
<rect x="353.0" y="149.5" width="12.4" height="4.6" fill="#c9ab9b" />
<rect x="463.3" y="149.5" width="12.1" height="4.6" fill="#c9ab9b" />
<rect x="385.2" y="125.8" width="5.2" height="11.1" fill="#c9ab9b" />
<rect x="385.2" y="235.2" width="5.2" height="11.1" fill="#c9ab9b" />
<rect x="353.0" y="157.1" width="12.4" height="4.6" fill="#a0a8ff" />
<rect x="463.3" y="157.1" width="12.1" height="4.6" fill="#c9ab9b" />
<rect x="392.8" y="125.8" width="5.2" height="11.1" fill="#c9ab9b" />
<rect x="392.8" y="235.2" width="5.2" height="11.1" fill="#c9ab9b" />
<rect x="353.0" y="164.7" width="12.4" height="4.6" fill="#c9ab9b" />
<rect x="463.3" y="164.7" width="12.1" height="4.6" fill="#c9ab9b" />
<rect x="400.4" y="125.8" width="5.2" height="11.1" fill="#c9ab9b" />
<rect x="400.4" y="235.2" width="5.2" height="11.1" fill="#c9ab9b" />
<rect x="353.0" y="172.3" width="12.4" height="4.6" fill="#c9ab9b" />
<rect x="463.3" y="172.3" width="12.1" height="4.6" fill="#c9ab9b" />
<rect x="408.0" y="125.8" width="5.2" height="11.1" fill="#c9ab9b" />
<rect x="408.0" y="235.2" width="5.2" height="11.1" fill="#c9ab9b" />
<rect x="353.0" y="179.9" width="12.4" height="4.6" fill="#c9ab9b" />
<rect x="463.3" y="179.9" width="12.1" height="4.6" fill="#c9ab9b" />
<rect x="415.6" y="125.8" width="5.2" height="11.1" fill="#c9ab9b" />
<rect x="415.6" y="235.2" width="5.2" height="11.1" fill="#c9ab9b" />
<rect x="353.0" y="187.5" width="12.4" height="4.6" fill="#c9ab9b" />
<rect x="463.3" y="187.5" width="12.1" height="4.6" fill="#c9ab9b" />
<rect x="423.2" y="125.8" width="5.2" height="11.1" fill="#c9ab9b" />
<rect x="423.2" y="235.2" width="5.2" height="11.1" fill="#c9ab9b" />
<rect x="353.0" y="195.1" width="12.4" height="4.6" fill="#c9ab9b" />
<rect x="463.3" y="195.1" width="12.1" height="4.6" fill="#c9ab9b" />
<rect x="430.8" y="125.8" width="5.2" height="11.1" fill="#c9ab9b" />
<rect x="430.8" y="235.2" width="5.2" height="11.1" fill="#c9ab9b" />
<rect x="353.0" y="202.7" width="12.4" height="4.6" fill="#c9ab9b" />
<rect x="463.3" y="202.7" width="12.1" height="4.6" fill="#c9ab9b" />
<rect x="438.4" y="125.8" width="5.2" height="11.1" fill="#c9ab9b" />
<rect x="438.4" y="235.2" width="5.2" height="11.1" fill="#c9ab9b" />
<rect x="353.0" y="210.3" width="12.4" height="4.6" fill="#c9ab9b" />
<rect x="463.3" y="210.3" width="12.1" height="4.6" fill="#c9ab9b" />
<rect x="446.0" y="125.8" width="5.2" height="11.1" fill="#c9ab9b" />
<rect x="446.0" y="235.2" width="5.2" height="11.1" fill="#c9ab9b" />
<rect x="353.0" y="217.9" width="12.4" height="4.6" fill="#c9ab9b" />
<rect x="463.3" y="217.9" width="12.1" height="4.6" fill="#c9ab9b" />
<rect x="453.6" y="125.8" width="5.2" height="11.1" fill="#c9ab9b" />
<rect x="453.6" y="235.2" width="5.2" height="11.1" fill="#c9ab9b" />
<rect x="353.0" y="225.5" width="12.4" height="4.6" fill="#c9ab9b" />
<rect x="463.3" y="225.5" width="12.1" height="4.6" fill="#c9ab9b" />
<text x="413" y="177" font-size="24" fill="#cfcfcf" font-weight="normal" text-anchor="middle" opacity="0.6">49</text>
<rect x="362.2" y="165.3" width="103.8" height="41.1" fill="#d8d840" opacity="0.72"/>
<text x="412" y="197.5" font-size="31" fill="#000" font-weight="bold" text-anchor="middle" textLength="93" lengthAdjust="spacingAndGlyphs" stroke="#000" stroke-width="0.9">UU201</text>
<text x="413.5" y="212" font-size="9" fill="#111" font-weight="normal" text-anchor="middle" textLength="99" lengthAdjust="spacingAndGlyphs">SN2011061RSLR VQFN</text>
<rect x="502.9" y="152.5" width="7.2" height="9.1" fill="#a3a3a3" />
<rect x="502.9" y="161.6" width="7.2" height="9.1" fill="#a3a3a3" />
<rect x="503.7" y="159.8" width="5.6" height="3.6" fill="#212121" />
<rect x="509.5" y="153.5" width="1.0" height="16.2" fill="#666" />
<rect x="514.1" y="152.5" width="7.5" height="9.1" fill="#7a8f7a" />
<rect x="514.1" y="161.6" width="7.5" height="9.1" fill="#a3a3a3" />
<rect x="514.9" y="159.8" width="5.9" height="3.6" fill="#212121" />
<rect x="521.0" y="153.5" width="1.0" height="16.2" fill="#666" />
<rect x="503.9" y="180.9" width="18.0" height="1.0" fill="#3a3a3a" />
<rect x="502.9" y="174.1" width="19.0" height="6.8" fill="#7a5546" />
<rect x="503.9" y="174.9" width="5.1" height="5.2" fill="#a3a3a3" />
<rect x="515.6" y="174.9" width="5.3" height="5.2" fill="#7a8f7a" />
<rect x="511.1" y="192.2" width="17.7" height="1.0" fill="#3a3a3a" />
<rect x="510.1" y="185.0" width="18.7" height="7.2" fill="#7a5546" />
<rect x="511.1" y="185.8" width="5.0" height="5.6" fill="#a3a3a3" />
<rect x="522.6" y="185.8" width="5.2" height="5.6" fill="#7a8f7a" />
<rect x="510.0" y="194.9" width="21.8" height="10.2" rx="1.5" fill="none" stroke="#8a8a8a" stroke-width="1"/>
<rect x="511.0" y="195.9" width="19.8" height="8.2" fill="#212121" />
<rect x="511.5" y="196.9" width="7.4" height="6.2" fill="#a3a3a3" />
<rect x="522.9" y="196.9" width="7.4" height="6.2" fill="#a3a3a3" />
<rect x="490.4" y="206.6" width="21.1" height="10.3" rx="1.5" fill="none" stroke="#8a8a8a" stroke-width="1"/>
<rect x="491.4" y="207.6" width="19.1" height="8.3" fill="#212121" />
<rect x="491.9" y="208.6" width="8.1" height="6.3" fill="#a3a3a3" />
<rect x="501.9" y="208.6" width="8.1" height="6.3" fill="#a3a3a3" />
<rect x="490.4" y="217.9" width="21.1" height="10.2" rx="1.5" fill="none" stroke="#8a8a8a" stroke-width="1"/>
<rect x="491.4" y="218.9" width="19.1" height="8.2" fill="#212121" />
<rect x="491.9" y="219.9" width="8.1" height="6.2" fill="#a3a3a3" />
<rect x="501.9" y="219.9" width="8.1" height="6.2" fill="#a3a3a3" />
<rect x="497.8" y="248.4" width="40.0" height="1.0" fill="#3a3a3a" />
<rect x="496.8" y="232.1" width="41.0" height="16.3" fill="#7a5546" />
<rect x="497.8" y="232.9" width="12.1" height="14.7" fill="#a3a3a3" />
<rect x="524.3" y="232.9" width="12.5" height="14.7" fill="#7a8f7a" />
<text x="516" y="244" font-size="10" fill="#a99ddc" font-weight="bold" text-anchor="middle" textLength="26" lengthAdjust="spacingAndGlyphs">CU206</text>
<text x="516" y="252" font-size="7.5" fill="#a99ddc" font-weight="normal" text-anchor="middle" textLength="92" lengthAdjust="spacingAndGlyphs">22UC_6.3VC_MC_X5RC_0603</text>
<rect x="568.0" y="167.0" width="32.0" height="30.0" fill="#333" />
<rect x="589.0" y="167.0" width="10.8" height="11.0" fill="#7a5546" />
<rect x="589.0" y="186.0" width="10.8" height="11.0" fill="#7a5546" />
<rect x="569.0" y="177.0" width="11.0" height="11.0" fill="#7a5546" />
<path d="M565.7 181v-10.5h8v-7h30v37.5h-30v-20z" fill="none" stroke="#888" stroke-width="1"/>
<text x="583" y="184" font-size="9.5" fill="#a99ddc" font-weight="bold" text-anchor="middle" textLength="26" lengthAdjust="spacingAndGlyphs">QU203</text>
<text x="583" y="191" font-size="7.5" fill="#a99ddc" font-weight="normal" text-anchor="middle" textLength="70" lengthAdjust="spacingAndGlyphs">LSI1012XT1G_SC-89-3</text>
<rect x="578.6" y="146.3" width="16.3" height="1.0" fill="#3a3a3a" />
<rect x="577.6" y="140.0" width="17.3" height="6.3" fill="#7a5546" />
<rect x="578.6" y="140.8" width="4.5" height="4.7" fill="#a3a3a3" />
<rect x="583.5" y="140.0" width="5.4" height="6.3" fill="#212121" />
<rect x="589.2" y="140.8" width="4.7" height="4.7" fill="#7a8f7a" />
<rect x="576.4" y="150.4" width="21.1" height="10.6" rx="1.5" fill="none" stroke="#8a8a8a" stroke-width="1"/>
<rect x="577.4" y="151.4" width="19.1" height="8.6" fill="#212121" />
<rect x="577.9" y="152.4" width="8.1" height="6.6" fill="#a3a3a3" />
<rect x="587.9" y="152.4" width="8.1" height="6.6" fill="#a3a3a3" />
<rect x="559.6" y="203.2" width="10.8" height="21.1" rx="1.5" fill="none" stroke="#8a8a8a" stroke-width="1"/>
<rect x="560.6" y="204.2" width="8.8" height="19.1" fill="#212121" />
<rect x="561.6" y="204.7" width="6.8" height="8.3" fill="#a3a3a3" />
<rect x="561.6" y="214.5" width="6.8" height="8.3" fill="#a3a3a3" />
<rect x="580.9" y="211.7" width="17.1" height="1.0" fill="#3a3a3a" />
<rect x="579.9" y="204.8" width="18.1" height="6.9" fill="#7a5546" />
<rect x="580.9" y="205.6" width="4.8" height="5.3" fill="#a3a3a3" />
<rect x="586.1" y="204.8" width="5.6" height="6.9" fill="#212121" />
<rect x="592.0" y="205.6" width="5.0" height="5.3" fill="#a3a3a3" />
<rect x="578.7" y="215.6" width="21.4" height="10.8" rx="1.5" fill="none" stroke="#8a8a8a" stroke-width="1"/>
<rect x="579.7" y="216.6" width="19.4" height="8.8" fill="#212121" />
<rect x="580.2" y="217.6" width="8.2" height="6.8" fill="#a3a3a3" />
<rect x="590.4" y="217.6" width="8.2" height="6.8" fill="#a3a3a3" />
<rect x="615.5" y="221.3" width="31.4" height="15.1" rx="1.5" fill="none" stroke="#8a8a8a" stroke-width="1"/>
<rect x="616.5" y="222.3" width="29.4" height="13.1" fill="#212121" />
<rect x="617.0" y="223.3" width="13.0" height="11.1" fill="#a3a3a3" />
<rect x="632.4" y="223.3" width="13.0" height="11.1" fill="#a3a3a3" />
<rect x="350.2" y="273.0" width="64.4" height="65.4" fill="#313133" />
<rect x="353.7" y="276.5" width="57.4" height="58.4" rx="1.5" fill="none" stroke="#8a8a8a" stroke-width="1"/>
<rect x="360.2" y="273.5" width="6.5" height="9.5" fill="#7a5546" />
<rect x="360.2" y="328.9" width="6.5" height="9.0" fill="#7a5546" />
<rect x="372.7" y="273.5" width="6.5" height="9.5" fill="#7a5546" />
<rect x="372.7" y="328.9" width="6.5" height="9.0" fill="#7a5546" />
<rect x="385.2" y="273.5" width="6.5" height="9.5" fill="#7a5546" />
<rect x="385.2" y="328.9" width="6.5" height="9.0" fill="#7a5546" />
<rect x="397.7" y="273.5" width="6.5" height="9.5" fill="#d84848" />
<rect x="397.7" y="328.9" width="6.5" height="9.0" fill="#7a5546" />
<rect x="358.2" y="292.0" width="48.4" height="39.0" fill="#7a5546" />
<rect x="351.2" y="300.0" width="62.4" height="11.0" fill="#7a5546" />
<rect x="433.3" y="272.2" width="63.1" height="65.2" fill="#313133" />
<rect x="436.8" y="275.7" width="56.1" height="58.2" rx="1.5" fill="none" stroke="#8a8a8a" stroke-width="1"/>
<rect x="443.3" y="272.7" width="6.5" height="9.5" fill="#7a5546" />
<rect x="443.3" y="327.9" width="6.5" height="9.0" fill="#7a5546" />
<rect x="455.8" y="272.7" width="6.5" height="9.5" fill="#7a5546" />
<rect x="455.8" y="327.9" width="6.5" height="9.0" fill="#7a5546" />
<rect x="468.3" y="272.7" width="6.5" height="9.5" fill="#7a5546" />
<rect x="468.3" y="327.9" width="6.5" height="9.0" fill="#7a5546" />
<rect x="480.8" y="272.7" width="6.5" height="9.5" fill="#d84848" />
<rect x="480.8" y="327.9" width="6.5" height="9.0" fill="#7a5546" />
<rect x="441.3" y="291.2" width="47.1" height="39.0" fill="#7a5546" />
<rect x="434.3" y="299.2" width="61.1" height="11.0" fill="#7a5546" />
<rect x="350.2" y="343.0" width="63.1" height="64.5" fill="#313133" />
<rect x="353.7" y="346.5" width="56.1" height="57.5" rx="1.5" fill="none" stroke="#8a8a8a" stroke-width="1"/>
<rect x="360.2" y="397.5" width="6.5" height="9.5" fill="#d84848" />
<rect x="360.2" y="343.5" width="6.5" height="9.0" fill="#7a5546" />
<rect x="372.7" y="397.5" width="6.5" height="9.5" fill="#7a5546" />
<rect x="372.7" y="343.5" width="6.5" height="9.0" fill="#7a5546" />
<rect x="385.2" y="397.5" width="6.5" height="9.5" fill="#7a5546" />
<rect x="385.2" y="343.5" width="6.5" height="9.0" fill="#7a5546" />
<rect x="397.7" y="397.5" width="6.5" height="9.5" fill="#7a5546" />
<rect x="397.7" y="343.5" width="6.5" height="9.0" fill="#7a5546" />
<rect x="358.2" y="349.5" width="47.1" height="39.0" fill="#7a5546" />
<rect x="351.2" y="369.5" width="61.1" height="11.0" fill="#7a5546" />
<rect x="433.6" y="343.0" width="62.8" height="64.5" fill="#313133" />
<rect x="437.1" y="346.5" width="55.8" height="57.5" rx="1.5" fill="none" stroke="#8a8a8a" stroke-width="1"/>
<rect x="443.6" y="397.5" width="6.5" height="9.5" fill="#d84848" />
<rect x="443.6" y="343.5" width="6.5" height="9.0" fill="#7a5546" />
<rect x="456.1" y="397.5" width="6.5" height="9.5" fill="#7a5546" />
<rect x="456.1" y="343.5" width="6.5" height="9.0" fill="#7a5546" />
<rect x="468.6" y="397.5" width="6.5" height="9.5" fill="#7a5546" />
<rect x="468.6" y="343.5" width="6.5" height="9.0" fill="#7a5546" />
<rect x="481.1" y="397.5" width="6.5" height="9.5" fill="#7a5546" />
<rect x="481.1" y="343.5" width="6.5" height="9.0" fill="#7a5546" />
<rect x="441.6" y="349.5" width="46.8" height="39.0" fill="#7a5546" />
<rect x="434.6" y="369.5" width="60.8" height="11.0" fill="#7a5546" />
<text x="377.5" y="308" font-size="17" fill="#c8c8c8" font-weight="normal" text-anchor="middle" >5</text>
<text x="459" y="307" font-size="17" fill="#c8c8c8" font-weight="normal" text-anchor="middle" >5</text>
<text x="385.8" y="361" font-size="17" fill="#c8c8c8" font-weight="normal" text-anchor="middle" >5</text>
<text x="469" y="360" font-size="17" fill="#c8c8c8" font-weight="normal" text-anchor="middle" >5</text>
<text x="382" y="310.6" font-size="12.5" fill="#a99ddc" font-weight="bold" text-anchor="middle" textLength="44" lengthAdjust="spacingAndGlyphs">PQ8302</text>
<text x="465" y="310" font-size="12.5" fill="#a99ddc" font-weight="bold" text-anchor="middle" textLength="44" lengthAdjust="spacingAndGlyphs">PQ8304</text>
<text x="382" y="318" font-size="7.6" fill="#a99ddc" font-weight="normal" text-anchor="middle" textLength="59" lengthAdjust="spacingAndGlyphs">AONR32314_DFN8</text>
<text x="465" y="317" font-size="7.6" fill="#a99ddc" font-weight="normal" text-anchor="middle" textLength="59" lengthAdjust="spacingAndGlyphs">AONR32314_DFN8</text>
<rect x="351.0" y="315.0" width="54.5" height="17.0" fill="#c8c8c8" opacity="0.55" rx="3"/>
<rect x="434.0" y="314.0" width="54.0" height="17.0" fill="#c8c8c8" opacity="0.55" rx="3"/>
<text x="377" y="327.5" font-size="8" fill="#1a1a1a" font-weight="normal" text-anchor="middle" textLength="46" lengthAdjust="spacingAndGlyphs">TBTB_VBUS20</text>
<text x="460" y="326.5" font-size="8" fill="#1a1a1a" font-weight="normal" text-anchor="middle" textLength="46" lengthAdjust="spacingAndGlyphs">TBTA_VBUS20</text>
<text x="382" y="380.5" font-size="12.5" fill="#a99ddc" font-weight="bold" text-anchor="middle" textLength="44" lengthAdjust="spacingAndGlyphs">PQ8303</text>
<text x="465" y="380" font-size="12.5" fill="#a99ddc" font-weight="bold" text-anchor="middle" textLength="44" lengthAdjust="spacingAndGlyphs">PQ8301</text>
<rect x="359.6" y="367.0" width="54.4" height="16.3" fill="#c8c8c8" opacity="0.55" rx="3"/>
<rect x="442.0" y="366.5" width="54.4" height="16.5" fill="#c8c8c8" opacity="0.55" rx="3"/>
<text x="386" y="378.5" font-size="8" fill="#1a1a1a" font-weight="normal" text-anchor="middle" textLength="46" lengthAdjust="spacingAndGlyphs">TBTB_VBUS20</text>
<text x="469" y="378" font-size="8" fill="#1a1a1a" font-weight="normal" text-anchor="middle" textLength="46" lengthAdjust="spacingAndGlyphs">TBTA_VBUS20</text>
<text x="382" y="389" font-size="7.6" fill="#a99ddc" font-weight="normal" text-anchor="middle" textLength="59" lengthAdjust="spacingAndGlyphs">AONR32314_DFN8</text>
<text x="465" y="388" font-size="7.6" fill="#a99ddc" font-weight="normal" text-anchor="middle" textLength="59" lengthAdjust="spacingAndGlyphs">AONR32314_DFN8</text>
<rect x="327.3" y="281.8" width="16.7" height="1.0" fill="#3a3a3a" />
<rect x="326.3" y="276.0" width="17.7" height="5.8" fill="#7a5546" />
<rect x="327.3" y="276.8" width="4.7" height="4.2" fill="#7a8f7a" />
<rect x="332.3" y="276.0" width="5.5" height="5.8" fill="#212121" />
<rect x="338.2" y="276.8" width="4.8" height="4.2" fill="#a3a3a3" />
<rect x="329.4" y="431.6" width="38.5" height="1.0" fill="#3a3a3a" />
<rect x="328.4" y="413.2" width="39.5" height="18.4" fill="#7a5546" />
<rect x="329.4" y="414.0" width="11.6" height="16.8" fill="#7a8f7a" />
<rect x="354.9" y="414.0" width="12.0" height="16.8" fill="#a3a3a3" />
<rect x="401.1" y="413.2" width="13.5" height="12.9" fill="#a3a3a3" />
<rect x="414.6" y="413.2" width="13.5" height="12.9" fill="#a3a3a3" />
<rect x="411.9" y="414.0" width="5.4" height="11.3" fill="#212121" />
<rect x="402.1" y="425.5" width="25.0" height="1.0" fill="#666" />
<rect x="398.2" y="429.2" width="33.6" height="15.1" rx="1.5" fill="none" stroke="#8a8a8a" stroke-width="1"/>
<rect x="398.9" y="443.3" width="30.9" height="1.0" fill="#212121" />
<rect x="398.9" y="430.5" width="30.9" height="12.8" fill="#7a5546" />
<rect x="399.9" y="431.3" width="10.1" height="11.2" fill="#7a8f7a" />
<rect x="410.6" y="430.5" width="7.4" height="12.8" fill="#212121" />
<rect x="418.7" y="431.3" width="10.1" height="11.2" fill="#7a8f7a" />
<rect x="460.3" y="430.3" width="38.7" height="1.0" fill="#3a3a3a" />
<rect x="459.3" y="411.3" width="39.7" height="19.0" fill="#7a5546" />
<rect x="460.3" y="412.1" width="11.7" height="17.4" fill="#a3a3a3" />
<rect x="485.9" y="412.1" width="12.1" height="17.4" fill="#7a8f7a" />
<rect x="502.1" y="390.3" width="15.4" height="32.2" rx="1.5" fill="none" stroke="#8a8a8a" stroke-width="1"/>
<rect x="503.1" y="391.0" width="13.4" height="29.5" fill="#7a5546" />
<rect x="503.9" y="392.0" width="11.8" height="9.6" fill="#a3a3a3" />
<rect x="503.9" y="409.9" width="11.8" height="9.6" fill="#7a8f7a" />
<rect x="519.8" y="391.9" width="11.6" height="13.9" fill="#a3a3a3" />
<rect x="519.8" y="405.8" width="11.6" height="13.9" fill="#a3a3a3" />
<rect x="520.6" y="402.3" width="10.0" height="6.9" fill="#212121" />
<rect x="530.8" y="392.9" width="1.0" height="25.8" fill="#666" />
<rect x="374.4" y="412.6" width="19.4" height="38.2" fill="#f0f0f0" />
<rect x="375.4" y="413.6" width="17.4" height="20.0" fill="#a6a6a6" />
<rect x="375.4" y="436.6" width="17.4" height="13.2" fill="#9b9bff" />
<rect x="374.4" y="418.6" width="1.5" height="26.2" fill="#ff0000" />
<rect x="392.3" y="418.6" width="1.5" height="26.2" fill="#ff0000" />
<text x="384.1" y="421.6" font-size="7" fill="#ddd" font-weight="normal" text-anchor="middle" >1</text>
<rect x="434.1" y="412.6" width="20.7" height="38.2" fill="#f0f0f0" />
<rect x="435.1" y="413.6" width="18.7" height="20.0" fill="#a6a6a6" />
<rect x="435.1" y="436.6" width="18.7" height="13.2" fill="#9b9bff" />
<rect x="434.1" y="418.6" width="1.5" height="26.2" fill="#ff0000" />
<rect x="453.3" y="418.6" width="1.5" height="26.2" fill="#ff0000" />
<text x="444.45000000000005" y="421.6" font-size="7" fill="#ddd" font-weight="normal" text-anchor="middle" >1</text>
<rect x="367.4" y="424.3" width="32.9" height="13.5" fill="#d8d840" opacity="0.8" rx="2"/>
<rect x="428.1" y="424.3" width="33.2" height="13.5" fill="#d8d840" opacity="0.8" rx="2"/>
<text x="384" y="434.5" font-size="9" fill="#000" font-weight="bold" text-anchor="middle" >PF8302</text>
<text x="444.7" y="434.5" font-size="9" fill="#000" font-weight="bold" text-anchor="middle" >PF8301</text>
<text x="385" y="442.5" font-size="7.5" fill="#000" font-weight="normal" text-anchor="middle" textLength="70" lengthAdjust="spacingAndGlyphs">SA_32V_0438005.WR</text>
<text x="447" y="442.5" font-size="7.5" fill="#000" font-weight="normal" text-anchor="middle" textLength="70" lengthAdjust="spacingAndGlyphs">SA_32V_0438005.WR</text>
<rect x="568.9" y="400.7" width="1.0" height="27.9" fill="#3a3a3a" />
<rect x="556.3" y="399.7" width="12.6" height="28.9" fill="#7a5546" />
<rect x="557.1" y="400.7" width="11.0" height="9.4" fill="#7a8f7a" />
<rect x="557.1" y="418.2" width="11.0" height="9.4" fill="#a3a3a3" />
<rect x="573.7" y="415.0" width="19.8" height="17.9" fill="#a3a3a3" />
<rect x="593.5" y="415.0" width="19.9" height="17.9" fill="#a3a3a3" />
<rect x="586.6" y="415.8" width="13.9" height="16.3" fill="#212121" />
<rect x="574.7" y="432.3" width="37.7" height="1.0" fill="#666" />
<rect x="609.0" y="298.2" width="38.7" height="1.0" fill="#3a3a3a" />
<rect x="608.0" y="280.1" width="39.7" height="18.1" fill="#7a5546" />
<rect x="609.0" y="280.9" width="11.7" height="16.5" fill="#7a8f7a" />
<rect x="634.6" y="280.9" width="12.1" height="16.5" fill="#a3a3a3" />
<rect x="724.8" y="292.7" width="39.2" height="1.0" fill="#3a3a3a" />
<rect x="723.8" y="274.7" width="40.2" height="18.0" fill="#7a5546" />
<rect x="724.8" y="275.5" width="11.9" height="16.4" fill="#a3a3a3" />
<rect x="750.7" y="275.5" width="12.3" height="16.4" fill="#7a8f7a" />
<rect x="664.5" y="343.7" width="73.5" height="42.0" rx="1.5" fill="none" stroke="#888" stroke-width="1"/>
<rect x="670.5" y="355.2" width="59.8" height="20.1" fill="#7a5546" />
<text x="700" y="350.5" font-size="11" fill="#c4c4c4" font-weight="normal" text-anchor="middle" >1</text>
<text x="700" y="357.5" font-size="11" fill="#c4c4c4" font-weight="normal" text-anchor="middle" >2</text>
<text x="700.5" y="370.5" font-size="15" fill="#a99ddc" font-weight="bold" text-anchor="middle" >PJ6202</text>
<text x="700" y="379" font-size="7" fill="#a99ddc" font-weight="normal" text-anchor="middle" >JUMP_43X118</text>
<rect x="741.2" y="389.4" width="19.0" height="19.6" fill="#a3a3a3" />
<rect x="741.2" y="409.0" width="19.0" height="19.6" fill="#a3a3a3" />
<rect x="742.0" y="401.2" width="17.4" height="15.7" fill="#212121" />
<rect x="759.6" y="390.4" width="1.0" height="37.2" fill="#666" />
<rect x="756.5" y="436.1" width="1.0" height="28.9" fill="#3a3a3a" />
<rect x="743.4" y="435.1" width="13.1" height="29.9" fill="#7a5546" />
<rect x="744.2" y="436.1" width="11.5" height="9.8" fill="#a3a3a3" />
<rect x="744.2" y="454.2" width="11.5" height="9.8" fill="#7a8f7a" />
<rect x="675.3" y="601.6" width="38.7" height="1.0" fill="#3a3a3a" />
<rect x="674.3" y="582.5" width="39.7" height="19.1" fill="#7a5546" />
<rect x="675.3" y="583.3" width="11.7" height="17.5" fill="#7a8f7a" />
<rect x="700.9" y="583.3" width="12.1" height="17.5" fill="#a3a3a3" />
<rect x="779.2" y="601.5" width="39.2" height="1.0" fill="#3a3a3a" />
<rect x="778.2" y="582.5" width="40.2" height="19.0" fill="#7a5546" />
<rect x="779.2" y="583.3" width="11.9" height="17.4" fill="#a3a3a3" />
<rect x="805.1" y="583.3" width="12.3" height="17.4" fill="#7a8f7a" />
<rect x="779.2" y="626.0" width="39.2" height="1.0" fill="#3a3a3a" />
<rect x="778.2" y="607.0" width="40.2" height="19.0" fill="#7a5546" />
<rect x="779.2" y="607.8" width="11.9" height="17.4" fill="#a3a3a3" />
<rect x="805.1" y="607.8" width="12.3" height="17.4" fill="#7a8f7a" />
<rect x="779.2" y="650.4" width="39.2" height="1.0" fill="#3a3a3a" />
<rect x="778.2" y="631.4" width="40.2" height="19.0" fill="#7a5546" />
<rect x="779.2" y="632.2" width="11.9" height="17.4" fill="#a3a3a3" />
<rect x="805.1" y="632.2" width="12.3" height="17.4" fill="#7a8f7a" />
<rect x="208.0" y="504.8" width="22.0" height="44.5" rx="1.5" fill="none" stroke="#8a8a8a" stroke-width="1"/>
<rect x="209.0" y="505.8" width="20.0" height="42.5" fill="#212121" />
<rect x="210.0" y="506.3" width="18.0" height="17.6" fill="#a3a3a3" />
<rect x="210.0" y="530.2" width="18.0" height="17.6" fill="#a3a3a3" />
<rect x="510.0" y="522.8" width="27.8" height="1.0" fill="#3a3a3a" />
<rect x="509.0" y="511.8" width="28.8" height="11.0" fill="#7a5546" />
<rect x="510.0" y="512.6" width="8.2" height="9.4" fill="#7a8f7a" />
<rect x="528.3" y="512.6" width="8.5" height="9.4" fill="#a3a3a3" />
<rect x="284.3" y="635.7" width="38.5" height="1.0" fill="#3a3a3a" />
<rect x="283.3" y="617.2" width="39.5" height="18.5" fill="#7a5546" />
<rect x="284.3" y="618.0" width="11.6" height="16.9" fill="#7a8f7a" />
<rect x="309.8" y="618.0" width="12.0" height="16.9" fill="#a3a3a3" />
<rect x="373.2" y="608.8" width="27.5" height="1.0" fill="#3a3a3a" />
<rect x="372.2" y="597.8" width="28.5" height="11.0" fill="#7a5546" />
<rect x="373.2" y="598.6" width="8.1" height="9.4" fill="#a3a3a3" />
<rect x="391.3" y="598.6" width="8.4" height="9.4" fill="#7a8f7a" />
<rect x="373.2" y="624.3" width="27.5" height="1.0" fill="#3a3a3a" />
<rect x="372.2" y="613.3" width="28.5" height="11.0" fill="#7a5546" />
<rect x="373.2" y="614.1" width="8.1" height="9.4" fill="#a3a3a3" />
<rect x="391.3" y="614.1" width="8.4" height="9.4" fill="#7a8f7a" />
<rect x="373.2" y="641.1" width="27.5" height="1.0" fill="#3a3a3a" />
<rect x="372.2" y="630.1" width="28.5" height="11.0" fill="#7a5546" />
<rect x="373.2" y="630.9" width="8.1" height="9.4" fill="#a3a3a3" />
<rect x="391.3" y="630.9" width="8.4" height="9.4" fill="#7a8f7a" />
<rect x="208.0" y="633.6" width="20.8" height="10.1" rx="1.5" fill="none" stroke="#8a8a8a" stroke-width="1"/>
<rect x="208.7" y="642.7" width="18.1" height="1.0" fill="#212121" />
<rect x="208.7" y="634.9" width="18.1" height="7.8" fill="#7a5546" />
<rect x="209.7" y="635.7" width="5.5" height="6.2" fill="#a3a3a3" />
<rect x="220.3" y="635.7" width="5.5" height="6.2" fill="#7a8f7a" />
<rect x="113.1" y="560.8" width="11.0" height="22.6" rx="1.5" fill="none" stroke="#8a8a8a" stroke-width="1"/>
<rect x="114.1" y="561.5" width="9.0" height="19.9" fill="#7a5546" />
<rect x="114.9" y="562.5" width="7.4" height="6.2" fill="#a3a3a3" />
<rect x="114.9" y="574.2" width="7.4" height="6.2" fill="#7a8f7a" />
<rect x="178.1" y="618.5" width="17.7" height="1.0" fill="#3a3a3a" />
<rect x="177.1" y="612.4" width="18.7" height="6.1" fill="#7a5546" />
<rect x="178.1" y="613.2" width="5.0" height="4.5" fill="#7a8f7a" />
<rect x="189.6" y="613.2" width="5.2" height="4.5" fill="#a3a3a3" />
<rect x="188.8" y="637.8" width="16.3" height="31.9" rx="1.5" fill="none" stroke="#8a8a8a" stroke-width="1"/>
<rect x="189.8" y="638.8" width="14.3" height="29.9" fill="#212121" />
<rect x="190.8" y="639.3" width="12.3" height="12.2" fill="#a3a3a3" />
<rect x="190.8" y="656.0" width="12.3" height="12.2" fill="#a3a3a3" />
<rect x="85.9" y="650.7" width="15.1" height="31.5" rx="1.5" fill="none" stroke="#8a8a8a" stroke-width="1"/>
<rect x="86.9" y="651.7" width="13.1" height="29.5" fill="#212121" />
<rect x="87.9" y="652.2" width="11.1" height="12.8" fill="#7a8f7a" />
<rect x="87.9" y="667.9" width="11.1" height="12.8" fill="#7a8f7a" />
<rect x="107.0" y="660.4" width="41.9" height="21.4" rx="1" fill="none" stroke="#8a8a8a" stroke-width="1"/>
<rect x="105.5" y="661.9" width="44.9" height="18.4" fill="#a3a3a3" />
<rect x="124.8" y="661.4" width="6.3" height="19.4" fill="#212121" />
<text x="127.95" y="676.3" font-size="16" fill="#a99ddc" font-weight="bold" text-anchor="middle" textLength="31" lengthAdjust="spacingAndGlyphs">RA2</text>
<text x="127.95" y="684.5999999999999" font-size="7" fill="#a99ddc" font-weight="normal" text-anchor="middle" textLength="37" lengthAdjust="spacingAndGlyphs">0_5%_0603</text>
<rect x="152.3" y="673.1" width="43.4" height="20.7" rx="1" fill="none" stroke="#8a8a8a" stroke-width="1"/>
<rect x="150.8" y="674.6" width="46.4" height="17.7" fill="#a3a3a3" />
<rect x="170.8" y="674.1" width="6.5" height="18.7" fill="#212121" />
<text x="174.0" y="688.3" font-size="16" fill="#a99ddc" font-weight="bold" text-anchor="middle" textLength="31" lengthAdjust="spacingAndGlyphs">RA6</text>
<text x="174.0" y="696.5999999999999" font-size="7" fill="#a99ddc" font-weight="normal" text-anchor="middle" textLength="37" lengthAdjust="spacingAndGlyphs">0_5%_0603</text>
<line x1="355" y1="192" x2="300.5" y2="548" stroke="#d9d9d9" stroke-width="1.2"/>
<line x1="381.5" y1="450" x2="306" y2="547" stroke="#d9d9d9" stroke-width="1.2"/>
<line x1="439.1" y1="450" x2="309" y2="549" stroke="#d9d9d9" stroke-width="1.2"/>
<rect x="289.2" y="547.7" width="19.2" height="58.2" fill="#f0f0f0" />
<rect x="290.2" y="548.7" width="17.2" height="18.0" fill="#8c8cff" />
<rect x="290.2" y="584.7" width="17.2" height="20.2" fill="#a4a4a4" />
<text x="298.79999999999995" y="556.7" font-size="7" fill="#eee" font-weight="normal" text-anchor="middle" >1</text>
<text x="298.79999999999995" y="595.9" font-size="7" fill="#ddd" font-weight="normal" text-anchor="middle" >2</text>
<rect x="321.9" y="547.7" width="21.0" height="58.2" fill="#f0f0f0" />
<rect x="322.9" y="548.7" width="19.0" height="18.0" fill="#8c8cff" />
<rect x="322.9" y="584.7" width="19.0" height="20.2" fill="#a4a4a4" />
<text x="332.4" y="556.7" font-size="7" fill="#eee" font-weight="normal" text-anchor="middle" >1</text>
<text x="332.4" y="595.9" font-size="7" fill="#ddd" font-weight="normal" text-anchor="middle" >2</text>
<path d="M288 555.2h-3v44h3M310 555.2h3v44h-3M322 555.2h-3v44h3M344 555.2h3v44h-3" fill="none" stroke="#ff0000" stroke-width="2"/>
<line x1="308" y1="557.3" x2="322" y2="557.3" stroke="#e0e0e0" stroke-width="1"/>
<rect x="282.4" y="570.2" width="30.8" height="12.6" fill="#d8d840" opacity="0.85" rx="2"/>
<rect x="316.2" y="570.2" width="32.6" height="12.6" fill="#d8d840" opacity="0.85" rx="2"/>
<text x="298" y="580.5" font-size="9" fill="#000" font-weight="bold" text-anchor="middle" >PL8301</text>
<text x="332.5" y="580.5" font-size="9" fill="#000" font-weight="bold" text-anchor="middle" >PL8302</text>
<text x="315" y="587.3" font-size="7.2" fill="#111" font-weight="normal" text-anchor="middle" textLength="116" lengthAdjust="spacingAndGlyphs">HCB2012KF-121T30_0805</text>
<circle cx="294.3" cy="740.5" r="66" fill="#748a75"/>
<rect x="2.0" y="201.0" width="2.0" height="42.0" fill="#7a5546" />
<rect x="2.0" y="204.0" width="1.5" height="6.0" fill="#3c3f55" />
<rect x="2.0" y="215.0" width="1.5" height="8.0" fill="#7a8f7a" />
<rect x="2.0" y="228.0" width="1.5" height="6.0" fill="#3c3f55" />
<rect x="2.0" y="279.0" width="2.0" height="42.0" fill="#7a5546" />
<rect x="2.0" y="282.0" width="1.5" height="6.0" fill="#3c3f55" />
<rect x="2.0" y="293.0" width="1.5" height="8.0" fill="#7a8f7a" />
<rect x="2.0" y="306.0" width="1.5" height="6.0" fill="#3c3f55" /></svg><!--/CANVAS-->

<!--MINI-->
<svg class="abs" style="left:661px;top:57px" width="239" height="158" viewBox="661 57 239 158">
<rect x="661" y="57" width="239" height="158" fill="#d6d6d6"/>
<rect x="824.5" y="55" width="22" height="42" rx="3" fill="#dcdcdc" stroke="#e6e6e6"/>
<rect x="848.5" y="55" width="22" height="42" rx="3" fill="#dcdcdc" stroke="#e6e6e6"/>
<rect x="827" y="57" width="18" height="9" fill="#ececec"/><rect x="850" y="57" width="18" height="9" fill="#ececec"/>
<rect x="827" y="67" width="18" height="15" fill="#e4e0de"/><rect x="850" y="67" width="18" height="15" fill="#e4e0de"/>
<rect x="827" y="82" width="18" height="12" fill="#e5e7e4"/><rect x="850" y="82" width="18" height="12" fill="#e5e7e4"/>
<rect x="671.5" y="66.5" width="220" height="140" fill="none" stroke="#a05555" stroke-width="1"/>
<g fill="none" stroke="#8a8a8a" stroke-width="1">
<rect x="693.5" y="106.5" width="5" height="7"/><rect x="707.5" y="107.5" width="5" height="5"/><rect x="700.5" y="115.5" width="6" height="3"/><rect x="729.5" y="109.5" width="5" height="5"/>
<rect x="693.5" y="131.5" width="4" height="8"/><rect x="704.5" y="129.5" width="7" height="7"/><rect x="782.5" y="129.5" width="4" height="4"/>
<rect x="787.5" y="180.5" width="7" height="7"/><rect x="781.5" y="188.5" width="3" height="3"/><rect x="806.5" y="185.5" width="8" height="8"/><rect x="877.5" y="183.5" width="4" height="4"/>
</g>
<rect x="687.5" y="126.5" width="43.5" height="31" fill="none" stroke="#5b7fe6" stroke-width="2.2"/>
<path d="M705 134l-2.8 17M702.2 151l5-3.5M702.2 151l-0.5-5" fill="none" stroke="#e04848" stroke-width="1"/>

</svg>
<div class="abs" style="left:676px;top:238px;width:237px;height:22px;background:rgba(80,95,105,0.35)"></div>
<div class="abs gs" style="left:708px;top:241.5px;font-size:11.5px;color:#1c1f21;white-space:pre;letter-spacing:-0.1px">Recorte de ventana</div>
<!--/MINI-->
<div id="panel"></div>
<!--PANEL-->
<div class="hdr" style="top:64px;height:20px"></div>
<div class="tri" style="left:915px;top:70px"></div>
<div class="p" style="left:935px;top:70px;font-size:10px">Net selected</div>
<div class="p" style="left:909px;top:91px;font-size:10px">TBT_VSYS</div>
<div class="p" style="left:930px;top:122px;font-size:10px">No data for this network [OBData]</div>
<div class="hdr" style="top:151px;height:20px"></div>
<div class="tri" style="left:915px;top:157px"></div>
<div class="p" style="left:935px;top:157px;font-size:10px">5 parts selected</div>

<div class="btn" style="left:909px;top:175px;width:41px">PL8301</div>
<div class="btn" style="left:958px;top:175px;width:14px">Z</div>
<div class="btn" style="left:980px;top:175px;width:89px">Schematic Search</div>
<div class="p" style="left:1077px;top:177px">2 Pins</div>
<div class="tbl" style="top:193px;height:36px">
 <div class="row" style="top:0;height:17px;background:#f7f7f7"><i class="g"></i><span style="left:10.5px">1</span><span class="nm" style="left:21px">TBT_VSYS</span></div>
 <div class="row" style="top:17px;height:17px;background:#ebebeb"><span style="left:10.5px">2</span><span class="nm" style="left:21px">CHARGER_IN</span></div>
</div>
<div class="abs" style="left:909px;top:246px;width:265px;height:1px;background:#a3a9b6"></div>

<div class="btn" style="left:909px;top:250px;width:39px">UU201</div>
<div class="btn" style="left:956px;top:250px;width:14px">Z</div>
<div class="btn" style="left:978px;top:250px;width:89px">Schematic Search</div>
<div class="p" style="left:1075px;top:252px">49 Pins</div>
<div class="tbl" style="top:268px;height:14px">
 <div class="row" style="top:0;height:12px;background:#f7f7f7"><i class="g" style="height:12px"></i><span style="left:9px;top:3px;font-size:7px">3 TBT_VSYS</span></div>
</div>
<div class="tbl" style="top:286px;height:324px;overflow:hidden">
<div class="row" style="top:0px;width:244px;background:#f7f7f7"><span style="left:10.5px">1</span><span class="nm" style="left:21px">TBT_I2C_SCL_R</span></div>
<div class="row" style="top:18px;width:244px;background:#ebebeb"><span style="left:10.5px">2</span><span class="nm" style="left:21px">USB_OC1_N_R</span></div>
<div class="row" style="top:36px;width:244px;background:#f7f7f7"><i class="g"></i><span style="left:10.5px">3</span><span class="nm" style="left:21px">TBT_VSYS</span></div>
<div class="row" style="top:54px;width:244px;background:#ebebeb"><span style="left:10.5px">4</span><span class="nm" style="left:21px">TBTB_GATE_VSYS</span></div>
<div class="row" style="top:72px;width:244px;background:#f7f7f7"><span style="left:10.5px">5</span><span class="nm" style="left:21px">TBTA_GATE_VSYS</span></div>
<div class="row" style="top:90px;width:244px;background:#ebebeb"><span style="left:10.5px">6</span><span class="nm" style="left:21px">TBTB_CC1</span></div>
<div class="row" style="top:107px;width:244px;background:#f7f7f7"><span style="left:10.5px">7</span><span class="nm" style="left:21px">TBTB_CC2</span></div>
<div class="row" style="top:125px;width:244px;background:#ebebeb"><span style="left:10.5px">8</span><span class="nm" style="left:21px">PD1_GPPC_B2_VRALERT_N</span></div>
<div class="row" style="top:143px;width:244px;background:#f7f7f7"><span style="left:10.5px">9</span><span class="nm" style="left:21px">PD_CE_DP_RTA</span></div>
<div class="row" style="top:161px;width:244px;background:#ebebeb"><span style="left:8px">10</span><span class="nm" style="left:23.5px">PD_CE_USB_RTB</span></div>
<div class="row" style="top:179px;width:244px;background:#f7f7f7"><span style="left:8px">11</span><span class="nm" style="left:23.5px">+5VALW</span></div>
<div class="row" style="top:197px;width:244px;background:#ebebeb"><span style="left:8px">12</span><span class="nm" style="left:23.5px">+5VALW</span></div>
<div class="row" style="top:215px;width:244px;background:#f7f7f7"><span style="left:8px">13</span><span class="nm" style="left:23.5px">VBUS_TBTB</span></div>
<div class="row" style="top:233px;width:244px;background:#ebebeb"><span style="left:8px">14</span><span class="nm" style="left:23.5px">VBUS_TBTB</span></div>
<div class="row" style="top:251px;width:244px;background:#f7f7f7"><span style="left:8px">15</span><span class="nm" style="left:23.5px">VBUS_TBTB</span></div>
<div class="row" style="top:268px;width:244px;background:#ebebeb"><span style="left:8px">16</span><span class="nm" style="left:23.5px">VBUS_TBTB</span></div>
<div class="row" style="top:286px;width:244px;background:#f7f7f7"><span style="left:8px">17</span><span class="nm" style="left:23.5px">+5VALW</span></div>
<div class="row" style="top:304px;width:244px;background:#ebebeb"><span style="left:8px">18</span><span class="nm" style="left:23.5px">TBTB_GATE_VBUS</span></div>
 <div class="abs" style="left:247px;top:2px;width:13px;height:118px;border-radius:6px;background:#bebebe"></div>
</div>
<div class="abs" style="left:909px;top:627px;width:265px;height:1px;background:#a3a9b6"></div>
<div class="btn" style="left:909px;top:631px;width:41px">PF8301</div>
<div class="btn" style="left:958px;top:631px;width:14px">Z</div>
<div class="btn" style="left:980px;top:631px;width:89px">Schematic Search</div>
<div class="p" style="left:1077px;top:633px">2 Pins</div>
<div class="tbl" style="top:649px;height:36px">
 <div class="row" style="top:0;height:17px;background:#f7f7f7"><span style="left:10.5px">1</span><span class="nm" style="left:21px">TBTA_VSYS</span></div>
 <div class="row" style="top:17px;height:17px;background:#ebebeb"><i class="g"></i><span style="left:10.5px">2</span><span class="nm" style="left:21px">TBT_VSYS</span></div>
</div>
<div class="abs" style="left:1181px;top:57px;width:19px;height:644px;background:#f6f6f6"></div>
<div class="abs" style="left:1184px;top:59px;width:13px;height:514px;border-radius:6.5px;background:#bfbfbf"></div>
<div class="abs" style="left:900px;top:238px;width:14px;height:22px;background:rgba(190,210,235,0.3)"></div>
<!--/PANEL-->

<div id="status"></div>
<!--SICONS-->
<svg class="abs" style="left:0;top:701px" width="420" height="28">
<g fill="none" stroke="#111" stroke-width="1.6">
<rect x="151" y="7.5" width="13" height="13" rx="1.5"/>
<path d="M154.5 7.5v-2h6v2" />
<path d="M231 10.5h6M231 14h4.5M231 17.5h6" stroke-width="1.4"/>
<circle cx="241.5" cy="12.5" r="2.8" stroke-width="1.4"/><path d="M243.5 14.5l2.8 2.8" stroke-width="1.6"/>
<circle cx="400.5" cy="13.5" r="6" stroke-width="1.6"/><path d="M400.5 5v3M400.5 19v3M392 13.5h3M406 13.5h3" stroke-width="1.6"/>
</g>
<rect x="153.5" y="4.5" width="8" height="3.5" fill="#111"/>
<circle cx="400.5" cy="13.5" r="2.6" fill="#111"/>
</svg>
<!--/SICONS-->
<div class="st" style="left:4px;font-size:13.8px;top:707.5px">Free Edition</div>
<div class="st" style="left:86px">V5.0535</div>
<div class="st" style="left:175px;font-size:14px;top:706.5px">empty</div>
<div class="st" style="left:256px;font-size:12.7px;top:707.5px">PL8301:1(TBT_VSYS)</div>
<div class="st" style="left:418px;font-size:13.2px;top:707px">T 1.901, 3.411" (48.28, 86.64mm)</div>
<div class="st" style="left:1000px">LCFC JS574 NM-E401 Rev10.tvw</div>
</body></html>
